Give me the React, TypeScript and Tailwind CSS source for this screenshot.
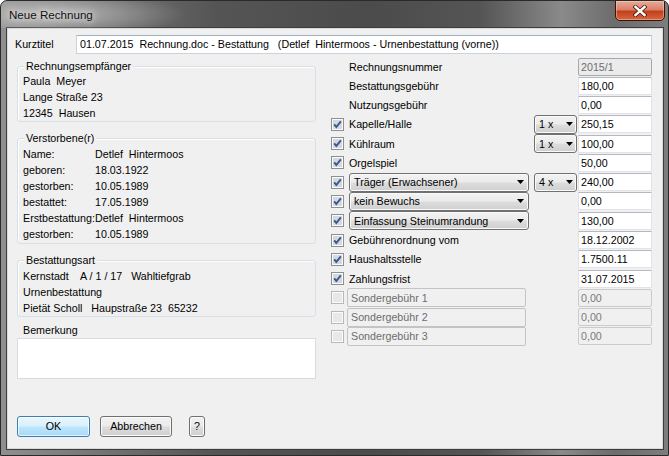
import clsx from 'clsx';

type FieldKind = 'normal' | 'readonly' | 'disabled';

export default function App() {
  return (
    <div className="relative flex h-[456px] w-[669px] flex-col overflow-hidden rounded-t-[7px] border border-[#2a2a2a] bg-[linear-gradient(90deg,#8f8f8f_0%,#7a7a7a_12%,#555555_32%,#4b4b4b_55%,#555555_72%,#8a8a8a_84%,#6c6c6c_92%,#7d7d7d_100%)] font-['Liberation_Sans',Arial,sans-serif] text-[10.7px] text-black">
      {/* Title bar */}
      <div className="relative flex h-[27px] shrink-0 items-center bg-[radial-gradient(ellipse_130px_22px_at_55px_13px,rgba(255,255,255,0.45),transparent)] pl-[8px]">
        <span className="text-[11.6px] text-[#111] [text-shadow:0_0_6px_rgba(255,255,255,0.9),0_0_12px_rgba(255,255,255,0.7)]">
          Neue Rechnung
        </span>
        <CloseButton />
      </div>

      {/* Client area */}
      <div className="ml-[6px] h-[421px] w-[656px] border border-[#d9d9d9] bg-[#f0f0f0] shadow-[0_0_0_1px_#3d3d3d]">
        <div className="mt-[6px] flex h-[19px] items-center">
          <span className="w-[68px] pl-[7px]">Kurztitel</span>
          <div className="flex h-[19px] w-[576px] items-center border border-[#c9d3de] border-t-[#9fb0c2] bg-white pl-[3px] whitespace-pre">
            01.07.2015  Rechnung.doc - Bestattung   (Detlef  Hintermoos - Urnenbestattung (vorne))
          </div>
        </div>

        <div className="flex">
          {/* Left column */}
          <div className="ml-[9px] w-[299px]">
            <GroupBox title="Rechnungsempfänger" className="mt-[12px] pt-[6px]">
              <Line>Paula  Meyer</Line>
              <Line>Lange Straße 23</Line>
              <Line>12345  Hausen</Line>
            </GroupBox>

            <GroupBox title="Verstorbene(r)" className="mt-[16px] pt-[7px] pb-[1px]">
              <Pair label="Name:" value="Detlef  Hintermoos" />
              <Pair label="geboren:" value="18.03.1922" />
              <Pair label="gestorben:" value="10.05.1989" />
              <Pair label="bestattet:" value="17.05.1989" />
              <Pair label="Erstbestattung:" value="Detlef  Hintermoos" />
              <Pair label="gestorben:" value="10.05.1989" />
            </GroupBox>

            <GroupBox title="Bestattungsart" className="mt-[16px] pt-[7px]">
              <Line>Kernstadt    A / 1 / 17   Wahltiefgrab</Line>
              <Line>Urnenbestattung</Line>
              <Line>Pietät Scholl   Haupstraße 23  65232</Line>
            </GroupBox>

            <div className="mt-[7px] pl-[6px] leading-[13px]">Bemerkung</div>
            <div className="mt-[1px] h-[41px] border border-[#d8dce2] bg-white" />
          </div>

          {/* Right column */}
          <div className="ml-[15px] mt-[3px] w-[321px]">
            <Row>
              <span className="w-[18px]" />
              <span className="flex-1">Rechnungsnummer</span>
              <Field value="2015/1" kind="readonly" />
            </Row>
            <Row>
              <span className="w-[18px]" />
              <span className="flex-1">Bestattungsgebühr</span>
              <Field value="180,00" />
            </Row>
            <Row>
              <span className="w-[18px]" />
              <span className="flex-1">Nutzungsgebühr</span>
              <Field value="0,00" />
            </Row>
            <Row>
              <Check />
              <span className="flex-1">Kapelle/Halle</span>
              <Combo text="1 x" className="mr-[1px] w-[43px] pr-[3px]" />
              <Field value="250,15" />
            </Row>
            <Row>
              <Check />
              <span className="flex-1">Kühlraum</span>
              <Combo text="1 x" className="mr-[1px] w-[43px] pr-[3px]" />
              <Field value="100,00" />
            </Row>
            <Row>
              <Check />
              <span className="flex-1">Orgelspiel</span>
              <Field value="50,00" />
            </Row>
            <Row>
              <Check />
              <Combo text="Träger (Erwachsener)" className="w-[180px] pr-[4px]" />
              <span className="flex-1" />
              <Combo text="4 x" className="mr-[1px] w-[43px] pr-[3px]" />
              <Field value="240,00" />
            </Row>
            <Row>
              <Check />
              <Combo text="kein Bewuchs" className="w-[180px] pr-[4px]" />
              <span className="flex-1" />
              <Field value="0,00" />
            </Row>
            <Row>
              <Check />
              <Combo text="Einfassung Steinumrandung" className="w-[180px] pr-[4px]" />
              <span className="flex-1" />
              <Field value="130,00" />
            </Row>
            <Row>
              <Check />
              <span className="flex-1">Gebührenordnung vom</span>
              <Field value="18.12.2002" />
            </Row>
            <Row>
              <Check />
              <span className="flex-1">Haushaltsstelle</span>
              <Field value="1.7500.11" />
            </Row>
            <Row>
              <Check />
              <span className="flex-1">Zahlungsfrist</span>
              <Field value="31.07.2015" />
            </Row>
            {['Sondergebühr 1', 'Sondergebühr 2', 'Sondergebühr 3'].map((name) => (
              <Row key={name}>
                <Check checked={false} disabled narrow />
                <div className="flex h-[19px] w-[179px] items-center rounded-[2px] border border-[#c4c4c4] pl-[3px] text-[#6d6d6d]">
                  {name}
                </div>
                <span className="flex-1" />
                <Field value="0,00" kind="disabled" />
              </Row>
            ))}
          </div>
        </div>

        {/* Buttons */}
        <div className="mt-[37px] flex items-center">
          <button className="ml-[9px] h-[21px] w-[73px] rounded-[3px] border border-[#3c7fb1] bg-[linear-gradient(#eaf6fd,#d9f0fc_48%,#bee6fd_52%,#a7d9f5)] shadow-[inset_0_0_0_1px_rgba(255,255,255,0.7)]">
            OK
          </button>
          <button className="ml-[10px] h-[21px] w-[72px] rounded-[3px] border border-[#707070] bg-[linear-gradient(#f2f2f2,#ebebeb_48%,#dddddd_52%,#cfcfcf)] shadow-[inset_0_0_0_1px_#fbfbfb]">
            Abbrechen
          </button>
          <button className="ml-[17px] h-[21px] w-[16px] rounded-[3px] border border-[#707070] bg-[linear-gradient(#f2f2f2,#ebebeb_48%,#dddddd_52%,#cfcfcf)] shadow-[inset_0_0_0_1px_#fbfbfb]">
            ?
          </button>
        </div>
      </div>
    </div>
  );
}

function CloseButton() {
  return (
    <div className="absolute right-[3px] top-[-1px] flex h-[21px] w-[50px] items-center justify-center rounded-b-[5px] border border-[#3b1208] bg-[linear-gradient(#e8aa98,#d98168_45%,#c4401c_55%,#d5673f)] shadow-[inset_0_0_0_1px_rgba(255,220,200,0.45)]">
      <svg width="14" height="12" viewBox="0 0 14 12">
        <path d="M2.5 2 L11.5 10 M11.5 2 L2.5 10" stroke="#4a1a10" strokeWidth="4" strokeLinecap="square" />
        <path d="M2.5 2 L11.5 10 M11.5 2 L2.5 10" stroke="#ffffff" strokeWidth="2.4" strokeLinecap="square" />
      </svg>
    </div>
  );
}

function GroupBox({ title, className, children }: { title: string; className?: string; children: React.ReactNode }) {
  return (
    <div className={clsx('relative rounded-[3px] border border-[#d5dfe5] pl-[5px] shadow-[inset_1px_1px_0_#ffffff]', className)}>
      <span className="absolute -top-[7px] left-[6px] bg-[#f0f0f0] px-[2px] leading-[13px]">{title}</span>
      {children}
    </div>
  );
}

function Line({ children }: { children: React.ReactNode }) {
  return <div className="h-[16px] leading-[16px] whitespace-pre">{children}</div>;
}

function Pair({ label, value }: { label: string; value: string }) {
  return (
    <div className="flex h-[16px] leading-[16px] whitespace-pre">
      <span className="w-[72px] shrink-0">{label}</span>
      <span>{value}</span>
    </div>
  );
}

function Row({ children }: { children: React.ReactNode }) {
  return <div className="flex h-[19.27px] items-center">{children}</div>;
}

function Field({ value, kind = 'normal' }: { value: string; kind?: FieldKind }) {
  const styles = {
    normal: 'border-[#e2e3ea] border-t-[#b5b8c0] bg-white text-black',
    readonly: 'rounded-[2px] border-[#a8a8a8] bg-[#ebebeb] text-[#6d6d6d]',
    disabled: 'rounded-[2px] border-[#cbcbcb] bg-[#f0f0f0] text-[#7a7a7a]',
  };
  return (
    <div className={clsx('flex h-[18px] w-[74px] shrink-0 items-center border pl-[2px]', styles[kind])}>
      {value}
    </div>
  );
}

function Combo({ text, className }: { text: string; className?: string }) {
  return (
    <div
      className={clsx(
        'flex h-[19px] shrink-0 items-center justify-between rounded-[3px] border border-[#707070] bg-[linear-gradient(#f2f2f2,#ebebeb_48%,#dddddd_52%,#cfcfcf)] pl-[4px] shadow-[inset_0_0_0_1px_#fafafa]',
        className,
      )}
    >
      <span className="whitespace-pre">{text}</span>
      <svg width="7" height="4" viewBox="0 0 7 4">
        <path d="M0 0h7L3.5 4z" fill="#000" />
      </svg>
    </div>
  );
}

function Check({ checked = true, disabled = false, narrow = false }: { checked?: boolean; disabled?: boolean; narrow?: boolean }) {
  return (
    <span className={clsx('flex shrink-0', narrow ? 'w-[16px]' : 'w-[18px]')}>
      <svg width="13" height="13" viewBox="0 0 13 13">
        <rect x="0.5" y="0.5" width="12" height="12" fill="#fbfbfb" stroke={disabled ? '#b8b8b8' : '#8e8f8f'} />
        <rect x="2" y="2" width="9" height="9" fill={disabled ? '#e8e8e8' : '#d3d9e1'} />
        {checked && (
          <path d="M3.2 6.3 L5.3 8.9 L9.9 3.3" fill="none" stroke="#41568f" strokeWidth="1.9" />
        )}
      </svg>
    </span>
  );
}
